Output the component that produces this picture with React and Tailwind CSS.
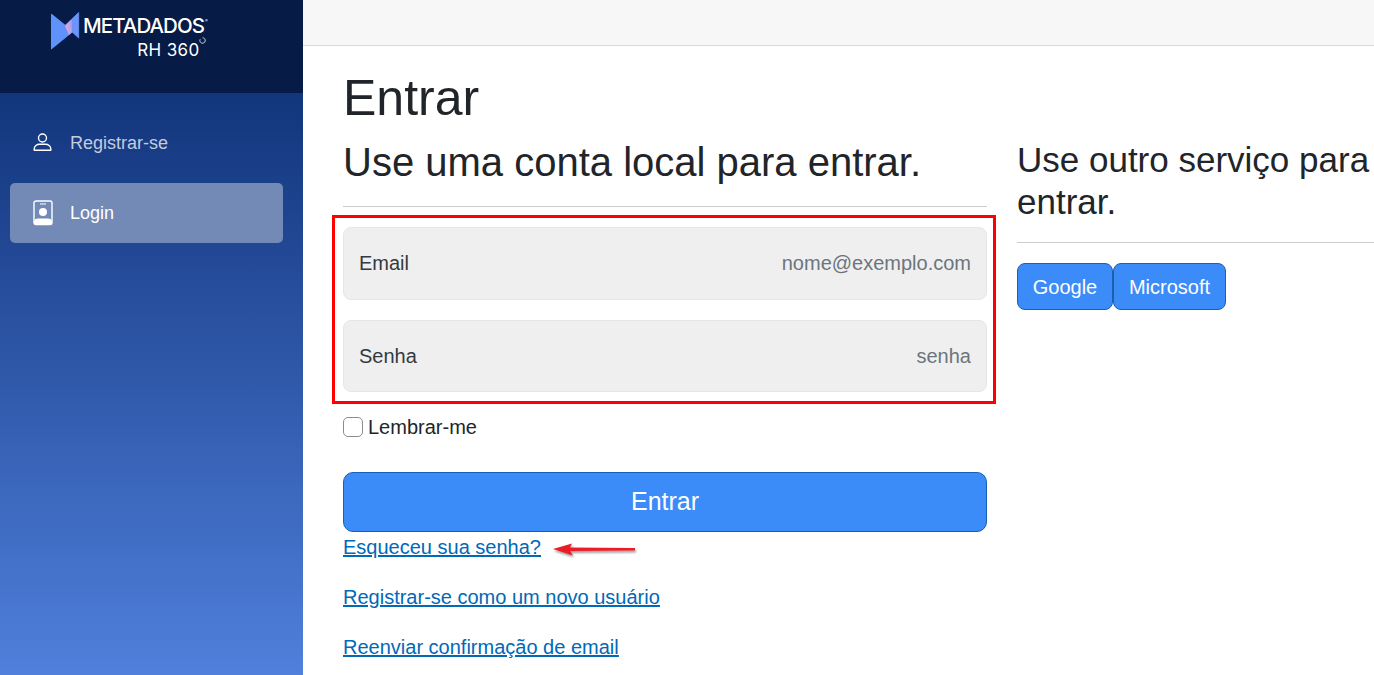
import React from "react";

function Logo() {
  return (
    <div className="flex items-start pl-[51px] pt-[12px]">
      <svg width="32" height="38" viewBox="0 0 32 38" className="shrink-0">
        <defs>
          <linearGradient id="mid" x1="14" x2="21" y1="0" y2="0" gradientUnits="userSpaceOnUse">
            <stop offset="0" stopColor="#f4a3cc" />
            <stop offset="1" stopColor="#a89ff2" />
          </linearGradient>
        </defs>
        <path d="M27.700 0.500 L14 13.500 L27.700 26 Z" fill="#6c94fa" stroke="#6c94fa" strokeWidth="0.800" strokeLinejoin="round" />
        <path d="M0.500 2.500 L21.500 19.500 L0.500 36.500 Z" fill="#5f93fb" stroke="#5f93fb" strokeWidth="1.200" strokeLinejoin="round" />
        <path d="M14 14 L20.500 7.500 L21 20 L18 23 Z" fill="url(#mid)" />
      </svg>
      <div className="flex flex-col items-end font-['Inter',sans-serif] text-white">
        <div className="flex items-start text-[20.500px] leading-[26px] tracking-[-0.950px] font-medium mt-[1px]">
          METADADOS<span className="text-[4px] leading-[10px] mt-[3px] ml-[1px] tracking-normal">®</span>
        </div>
        <div className="relative mr-[8px] text-[17px] leading-[22px] tracking-[0.400px]">
          RH 360
          <svg width="7" height="7" viewBox="0 0 7 7" className="absolute -right-[6px] top-[-2px]" fill="none" stroke="#fff" strokeWidth="0.800">
            <path d="M3.500 0.800 A2.700 2.700 0 1 1 1.200 2.200" />
          </svg>
        </div>
      </div>
    </div>
  );
}

function Sidebar() {
  return (
    <aside className="w-[303px] h-full shrink-0 flex flex-col">
      <div className="h-[93px] shrink-0 bg-[#061b45]">
        <Logo />
      </div>
      <nav className="flex-1 flex flex-col pl-[10px] pr-[20px] pt-[20px] bg-gradient-to-b from-[#12357c] to-[#5080dc] font-['Liberation_Sans',sans-serif] text-[18px]">
        <div className="h-[60px] flex items-center pl-[23px] text-[#c3cbdd]">
          <svg width="20" height="20" viewBox="0 0 20 20" fill="none" stroke="#fff" strokeWidth="1.400" className="mr-[17px] shrink-0">
            <circle cx="9.500" cy="5" r="4" />
            <path d="M1.200 17.300 V16 C1.200 13 4 11.300 6.500 11.300 H12.500 C15 11.300 17.800 13 17.800 16 V17.300 Z" strokeLinejoin="round" />
          </svg>
          Registrar-se
        </div>
        <div className="mt-[10px] h-[60px] flex items-center pl-[23px] rounded-[5px] bg-[#7389b6] text-white">
          <svg width="20" height="26" viewBox="0 0 20 26" className="mr-[17px] shrink-0">
            <rect x="1" y="1" width="18" height="23.500" rx="2" fill="none" stroke="#fff" strokeWidth="1.400" />
            <rect x="7" y="3.500" width="6" height="1" fill="#fff" />
            <circle cx="10" cy="12" r="4" fill="#fff" />
            <path d="M1 24.500 V21.500 C1 19.500 3 18.500 5 18.500 H15 C17 18.500 19 19.500 19 21.500 V24.500 Z" fill="#fff" />
          </svg>
          Login
        </div>
      </nav>
    </aside>
  );
}

function Field({ label, placeholder, type, height }) {
  return (
    <label className={`flex items-center justify-between px-[15px] rounded-[8px] border border-[#e6e6e6] bg-[#efefef] ${height}`}>
      <span className="text-[20px] text-[#343a40] -mt-[1px]">{label}</span>
      <input
        type={type}
        placeholder={placeholder}
        className="min-w-0 flex-1 bg-transparent text-right text-[20px] -mt-[1px] outline-none placeholder:text-[#6c757d]"
      />
    </label>
  );
}

function LoginColumn() {
  return (
    <section className="w-[644px] shrink-0 relative">
      <h2 className="text-[40px] leading-[48px] text-[#212529]">Use uma conta local para entrar.</h2>
      <hr className="mt-[20px] border-0 border-t border-[#cccccc]" />
      <div className="mt-[20px] flex flex-col gap-[20px]">
        <Field label="Email" placeholder="nome@exemplo.com" type="email" height="h-[73px]" />
        <Field label="Senha" placeholder="senha" type="password" height="h-[72px]" />
      </div>
      <div className="absolute left-[-11px] top-[77px] h-[189px] w-[664px] border-[3px] border-[#ff0000] pointer-events-none" />
      <label className="mt-[25px] h-[20px] flex items-center text-[20px] text-[#212529]">
        <input type="checkbox" className="appearance-none w-[20px] h-[20px] mr-[5px] rounded-[5px] border border-[#8c8c8c] bg-white" />
        Lembrar-me
      </label>
      <button className="mt-[35px] block w-full h-[60px] rounded-[10px] border border-[#1a5fb0] bg-[#3b8bf8] text-[25px] text-white">
        Entrar
      </button>
      <div className="relative flex flex-col text-[20px] leading-[30px] text-[#0069b8] underline">
        <a className="w-fit">Esqueceu sua senha?</a>
        <a className="w-fit mt-[20px]">Registrar-se como um novo usuário</a>
        <a className="w-fit mt-[20px]">Reenviar confirmação de email</a>
        <svg width="90" height="20" viewBox="0 0 90 20" className="absolute left-[209px] top-[8px] drop-shadow-[1px_2px_1px_rgba(0,0,0,0.4)]">
          <path d="M1 9 L20 3.500 L18 7.500 L83 8 L83 10.500 L18 11 L21 15.500 Z" fill="#ed1c24" />
        </svg>
      </div>
    </section>
  );
}

function ExternalColumn() {
  return (
    <section className="w-[420px] shrink-0">
      <h3 className="text-[35px] leading-[42px] text-[#212529] mt-[1px]">Use outro serviço para entrar.</h3>
      <hr className="mt-[19px] border-0 border-t border-[#cccccc]" />
      <div className="mt-[20px] flex">
        <button className="h-[47px] w-[96px] rounded-[8px] border border-[#1a5fb0] bg-[#3b8bf8] text-[20px] text-white">Google</button>
        <button className="h-[47px] w-[113px] rounded-[8px] border border-[#1a5fb0] bg-[#3b8bf8] text-[20px] text-white">Microsoft</button>
      </div>
    </section>
  );
}

export default function App() {
  return (
    <div className="flex h-[675px] w-[1374px] overflow-hidden bg-white font-['Liberation_Sans',Arial,sans-serif]">
      <Sidebar />
      <main className="flex-1 min-w-0 overflow-hidden">
        <div className="h-[46px] border-b border-[#d8d8d8] bg-[#f7f7f7]" />
        <div className="pl-[40px] pt-[22px]">
          <h1 className="text-[50px] leading-[60px] text-[#212529]">Entrar</h1>
          <div className="mt-[10px] flex gap-[30px]">
            <LoginColumn />
            <ExternalColumn />
          </div>
        </div>
      </main>
    </div>
  );
}
